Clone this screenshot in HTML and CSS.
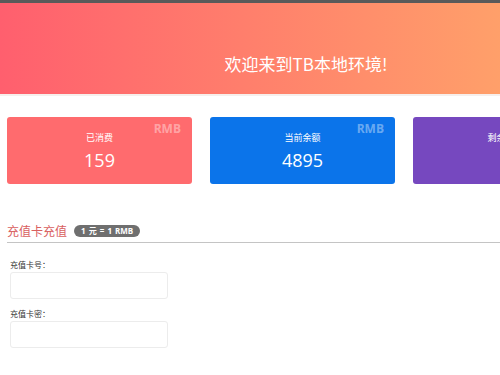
FILE: index.html
```html
<!DOCTYPE html>
<html lang="zh-CN">
  <head>
    <meta charset="UTF-8">
    <meta name="viewport" content="width=device-width, initial-scale=1.0">
    <title>TB本地环境</title>
    <link rel="stylesheet" href="styles.css">
  </head>
  <body>
    <div class="page">
      <div class="top-bar"></div>
      <div class="hero">
        <h1 class="hero-title">欢迎来到TB本地环境!</h1>
      </div>

      <div class="stat-row">
        <div class="stat-card stat-spent">
          <span class="stat-unit">RMB</span>
          <div class="stat-label">已消费</div>
          <div class="stat-value">159</div>
        </div>
        <div class="stat-card stat-balance">
          <span class="stat-unit">RMB</span>
          <div class="stat-label">当前余额</div>
          <div class="stat-value">4895</div>
        </div>
        <div class="stat-card stat-left">
          <span class="stat-unit">RMB</span>
          <div class="stat-label">剩余额度</div>
          <div class="stat-value">0</div>
        </div>
      </div>

      <div class="section-head">
        <h2 class="section-title">充值卡充值</h2>
        <span class="rate-badge">1 元 = 1 RMB</span>
      </div>

      <form class="recharge-form">
        <label class="form-label" for="cardNo">充值卡号：</label>
        <input class="form-input" id="cardNo" type="text">
        <label class="form-label" for="cardPwd">充值卡密：</label>
        <input class="form-input" id="cardPwd" type="password">
      </form>
    </div>
  </body>
</html>
```

FILE: styles.css
```css
:root {
  --spent: #ff6b6e;
  --balance: #0b74ea;
  --left: #7648bf;
  --title-red: #d9605f;
  --badge-bg: #6f6f6f;
  --line: #c4c4c4;
  --input-border: #ececec;
}

html,
body {
  overflow-x: hidden;
}

body {
  margin: 0;
  padding: 0;
  font-family: "Open Sans", "Noto Sans CJK SC", sans-serif;
  background: #fff;
  color: #333;
}

.page {
  width: 612px;
}

.top-bar {
  height: 3px;
  background: #5a5a5a;
}

.hero {
  height: 93px;
  background: linear-gradient(90deg, #ff5f6e 0%, #ffae69 100%);
  border-bottom: 2px solid #f6efec;
  box-sizing: border-box;
  padding-top: 47px;
}

.hero-title {
  margin: 0;
  text-align: center;
  font-size: 17px;
  font-weight: normal;
  line-height: 28px;
  color: #fff;
  font-family: "Noto Sans CJK SC", "Open Sans", sans-serif;
}

.stat-row {
  display: flex;
  gap: 18px;
  padding: 21px 7px 0;
}

.stat-card {
  position: relative;
  width: 185px;
  height: 67px;
  border-radius: 3px;
  color: #fff;
  text-align: center;
  box-sizing: border-box;
  padding-top: 14px;
}

.stat-spent { background: var(--spent); }
.stat-balance { background: var(--balance); }
.stat-left { background: var(--left); }

.stat-unit {
  position: absolute;
  top: 3px;
  right: 11px;
  font-size: 12px;
  font-weight: bold;
  color: rgba(255, 255, 255, 0.4);
  font-family: "Open Sans", sans-serif;
}

.stat-label {
  font-size: 9px;
  line-height: 13px;
  font-family: "Noto Sans CJK SC", sans-serif;
}

.stat-value {
  margin-top: 4px;
  font-size: 18px;
  line-height: 24px;
}

.section-head {
  display: flex;
  align-items: center;
  gap: 7px;
  margin: 38px 0 0 7px;
  padding-bottom: 2px;
  border-bottom: 1px solid var(--line);
}

.section-title {
  margin: 0;
  font-size: 12px;
  font-weight: normal;
  line-height: 18px;
  color: var(--title-red);
  font-family: "Noto Sans CJK SC", sans-serif;
}

.rate-badge {
  background: var(--badge-bg);
  color: #fff;
  font-size: 8px;
  font-weight: bold;
  line-height: 12px;
  padding: 0 7px;
  border-radius: 7px;
  word-spacing: 1px;
  font-family: "Open Sans", "Noto Sans CJK SC", sans-serif;
}

.recharge-form {
  display: flex;
  flex-direction: column;
  align-items: flex-start;
  padding: 16px 0 0 10px;
}

.form-label {
  display: block;
  font-size: 8px;
  line-height: 12px;
  color: #333;
  font-family: "Noto Sans CJK SC", sans-serif;
  margin-bottom: 1px;
}

.form-input {
  display: block;
  width: 158px;
  height: 27px;
  box-sizing: border-box;
  border: 1px solid var(--input-border);
  border-radius: 3px;
  padding: 0;
  margin: 0 0 9px;
  outline: none;
}
```
